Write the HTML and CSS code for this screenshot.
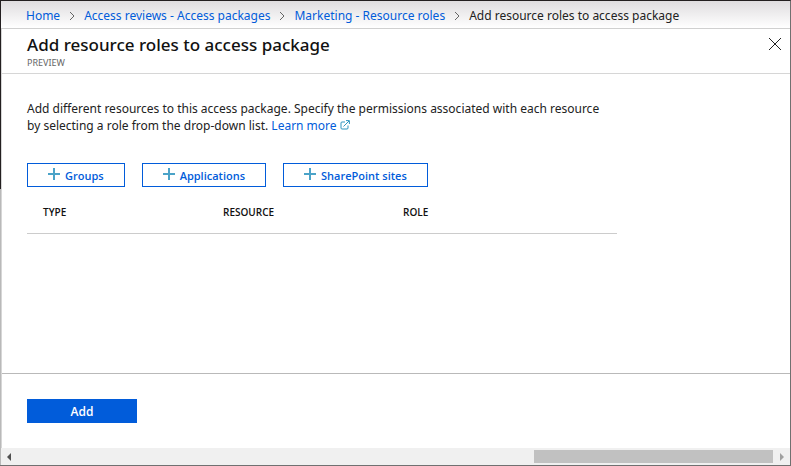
FILE: index.html
```html
<!DOCTYPE html>
<html lang="en">
<head>
<meta charset="utf-8">
<title>Add resource roles to access package</title>
<link rel="stylesheet" href="styles.css">
</head>
<body>
<div class="window">
  <nav class="breadcrumb" aria-label="Breadcrumb">
    <a href="#">Home</a>
    <svg class="chevron" viewBox="0 0 6 10"><path d="M1 1l4 4-4 4"/></svg>
    <a href="#">Access reviews - Access packages</a>
    <svg class="chevron" viewBox="0 0 6 10"><path d="M1 1l4 4-4 4"/></svg>
    <a href="#">Marketing - Resource roles</a>
    <svg class="chevron" viewBox="0 0 6 10"><path d="M1 1l4 4-4 4"/></svg>
    <span>Add resource roles to access package</span>
  </nav>
  <div class="blade">
    <header class="header">
      <div>
        <h1>Add resource roles to access package</h1>
        <p class="subtitle">PREVIEW</p>
      </div>
      <button class="close" aria-label="Close"><svg viewBox="0 0 12 12"><path d="M0 0l12 12M12 0L0 12"/></svg></button>
    </header>
    <main class="content">
      <p class="intro">Add different resources to this access package. Specify the permissions associated with each resource by selecting a role from the drop-down list. <a href="#">Learn more <svg class="external" viewBox="0 0 10 10"><path d="M5 2H2Q1 2 1 3V8Q1 9 2 9H7Q8 9 8 8V5.500M3.500 6.500L9 1M6 .6H9.400V4"/></svg></a></p>
      <div class="actions">
        <button class="outline"><svg class="plus" viewBox="0 0 12 12"><path d="M6 0v12M0 6h12"/></svg>Groups</button>
        <button class="outline"><svg class="plus" viewBox="0 0 12 12"><path d="M6 0v12M0 6h12"/></svg>Applications</button>
        <button class="outline"><svg class="plus" viewBox="0 0 12 12"><path d="M6 0v12M0 6h12"/></svg>SharePoint sites</button>
      </div>
      <table class="roles">
        <thead><tr><th>TYPE</th><th>RESOURCE</th><th class="role">ROLE</th></tr></thead>
      </table>
    </main>
    <footer class="footer"><button class="primary">Add</button></footer>
  </div>
  <div class="scrollbar">
    <svg class="arrow" viewBox="0 0 4 8"><path d="M4 0v8L0 4z"/></svg>
    <div class="track"><div class="thumb"></div></div>
    <svg class="arrow end" viewBox="0 0 4 8"><path d="M0 0v8l4-4z"/></svg>
  </div>
</div>
</body>
</html>
```
FILE: styles.css
```css
* { box-sizing: border-box; }

body {
  margin: 0;
  font-family: "Noto Sans", sans-serif;
  font-size: 12px;
  color: #222;
  background: #fff;
}

h1, p { margin: 0; }
a { color: #015cda; text-decoration: none; }
button { font: 600 11px "Open Sans", sans-serif; cursor: pointer; }
svg { fill: none; flex: none; }

.window {
  display: flex;
  flex-direction: column;
  min-height: 100vh;
  padding-left: 1px;
  border-top: 1px solid #231f20;
  border-right: 1px solid #707070;
  border-bottom: 1px solid #707070;
  background: linear-gradient(#231f20 188px, #b9b9b9 188px) left / 1px 100% no-repeat;
}

.breadcrumb {
  display: flex;
  align-items: center;
  gap: 9px;
  height: 28px;
  padding: 2px 25px 0;
  border-bottom: 1px solid #d0d0d0;
  background: linear-gradient(#dfdddf, #fff);
  white-space: nowrap;
}

.chevron { width: 6px; height: 10px; stroke: #666; }

.blade {
  flex: 1;
  display: flex;
  flex-direction: column;
  border-left: 1px solid #d6d6d6;
}

.header {
  display: flex;
  justify-content: space-between;
  align-items: flex-start;
  height: 45px;
  padding: 4px 9px 0 25px;
  border-bottom: 1px solid #d6d6d6;
}

h1 { font-size: 17px; line-height: 24px; font-weight: 500; color: #111; }
.subtitle { font-size: 9px; line-height: 12px; color: #666; }

.close {
  display: flex;
  margin-top: 5px;
  padding: 0;
  border: 0;
  background: none;
}
.close svg { width: 12px; height: 12px; stroke: #222; }

.content { flex: 1; padding: 26px 25px; }
.intro { max-width: 584px; line-height: 17px; }
.external { width: 10px; height: 10px; stroke: #2f95bf; }

.actions { display: flex; gap: 17px; margin-top: 29px; }
.outline {
  display: flex;
  align-items: center;
  gap: 5px;
  height: 24px;
  padding: 0 20px;
  border: 1px solid #015cda;
  background: #fff;
  color: #015cda;
}
.plus { width: 12px; height: 12px; margin-bottom: 2px; stroke: #4ba3c8; stroke-width: 2; }

.roles {
  width: 100%;
  max-width: 590px;
  margin-top: 7px;
  border-collapse: collapse;
  border-bottom: 1px solid #ccc;
  table-layout: fixed;
}
.roles th {
  width: 180px;
  height: 39px;
  padding: 0 16px 2px;
  text-align: left;
  font: 600 10px "Open Sans", sans-serif;
  color: #111;
}
.roles .role { width: auto; }

.footer { padding: 25px; border-top: 1px solid #b9b9b9; }
.primary {
  display: block;
  width: 110px;
  height: 24px;
  padding: 0;
  border: 0;
  background: #015cda;
  color: #fff;
  font-size: 12px;
}

.scrollbar {
  display: flex;
  align-items: center;
  gap: 7px;
  height: 17px;
  padding: 0 6px;
  background: #f0f0f0;
}
.arrow { width: 4px; height: 8px; fill: #505050; }
.arrow.end { fill: #a0a0a0; }
.track { flex: 1; display: flex; justify-content: flex-end; }
.thumb { width: 31.7%; height: 13px; background: #c1c1c1; }
```
